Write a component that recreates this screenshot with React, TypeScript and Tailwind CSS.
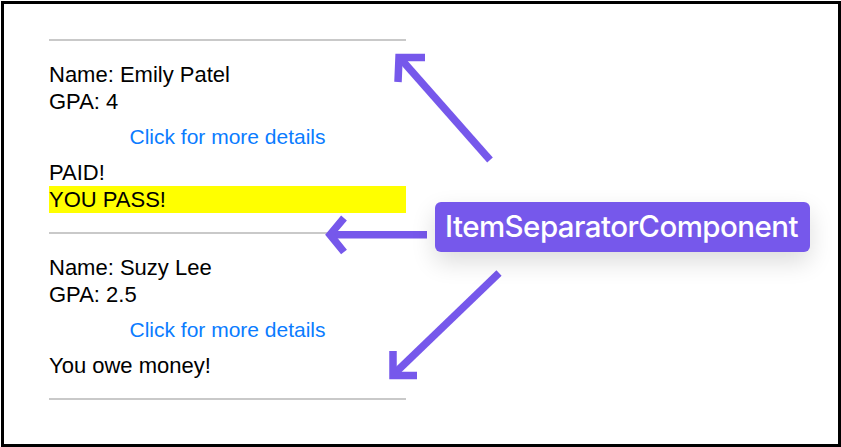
import React from 'react';

type Student = {
  name: string;
  gpa: string;
  paid: boolean;
  pass: boolean;
};

const STUDENTS: Student[] = [
  { name: 'Emily Patel', gpa: '4', paid: true, pass: true },
  { name: 'Suzy Lee', gpa: '2.5', paid: false, pass: false },
];

const ACCENT = '#7658eb';

function Separator() {
  return <div className="h-[2px] bg-[#c9c9c9]" />;
}

function StudentItem({ student }: { student: Student }) {
  return (
    <div className="pt-[20px] pb-[19px] text-[22px] leading-[27px] text-black">
      <p>Name: {student.name}</p>
      <p>GPA: {student.gpa}</p>
      <div className="pt-[8px] pb-[9px] text-center">
        <button type="button" className="text-[21px] leading-[27px] text-[#0a7cff]">
          Click for more details
        </button>
      </div>
      <p>{student.paid ? 'PAID!' : 'You owe money!'}</p>
      {student.pass && <p className="bg-[#ffff00]">YOU PASS!</p>}
    </div>
  );
}

export default function App() {
  return (
    <div className="relative w-[841px] h-[447px] bg-white pl-px pt-px font-['Liberation_Sans',Arial,sans-serif]">
      {/* Phone list screenshot */}
      <div className="w-[840px] h-[446px] border-[3px] border-black pl-[45px] pt-[35px]">
        <div className="w-[357px]">
          <Separator />
          {STUDENTS.map((s) => (
            <React.Fragment key={s.name}>
              <StudentItem student={s} />
              <Separator />
            </React.Fragment>
          ))}
        </div>
      </div>

      {/* Annotation arrows */}
      <svg
        className="absolute left-0 top-0 pointer-events-none"
        width="841"
        height="447"
        viewBox="0 0 841 447"
        fill="none"
        stroke={ACCENT}
        strokeWidth="7.5"
        strokeLinecap="butt"
        strokeLinejoin="miter"
      >
        <path d="M490 160 L400 58" />
        <path d="M425 57.5 L399 57.5 L398 82" />

        <path d="M427 234.7 L332 234.7" />
        <path d="M344 218 L330 234.7 L344 252" />

        <path d="M499 273 L394 374" />
        <path d="M393 351 L393 375.5 L417 375.5" />
      </svg>

      {/* Annotation label */}
      <div className="absolute left-[435px] top-[202px] w-[375px] h-[50px] rounded-[6px] bg-[#7658eb] flex items-center justify-center pr-[2px] shadow-[0_10px_24px_rgba(0,0,0,0.14)]">
        <span className="font-['Inter',sans-serif] font-medium text-[29.5px] leading-none text-white tracking-[-0.55px]">
          ItemSeparatorComponent
        </span>
      </div>
    </div>
  );
}
